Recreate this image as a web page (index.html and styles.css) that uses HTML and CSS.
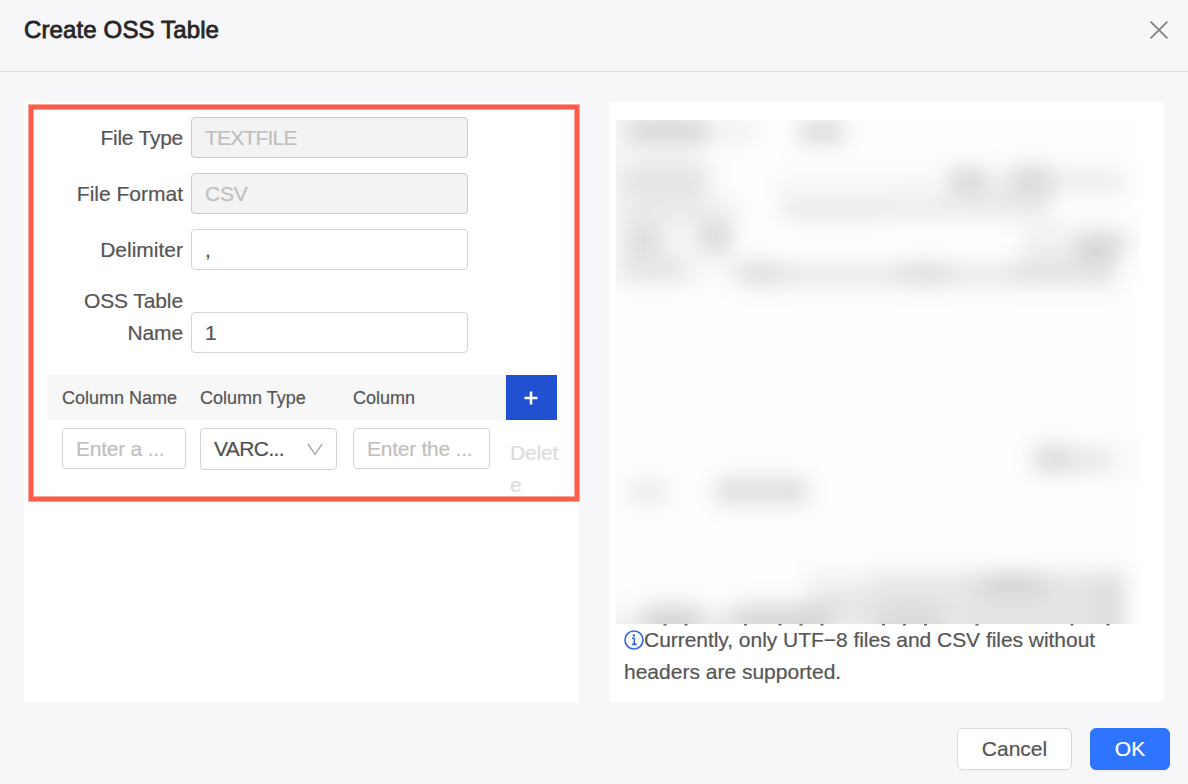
FILE: index.html
```html
<!DOCTYPE html>
<html lang="en">
<head>
<meta charset="utf-8">
<title>Create OSS Table</title>
<link rel="stylesheet" href="styles.css">
</head>
<body>
<div class="dialog">
  <header class="dialog-header">
    <h1 class="title">Create OSS Table</h1>
    <svg class="close" width="20" height="20" viewBox="0 0 20 20"><path d="M1.6 1.6 18.4 18.4M18.4 1.6 1.6 18.4"/></svg>
  </header>
  <main class="panels">
    <section class="panel form-panel">
      <div class="field"><span class="label tight">File Type</span><div class="input disabled caps">TEXTFILE</div></div>
      <div class="field"><span class="label">File Format</span><div class="input disabled tight">CSV</div></div>
      <div class="field"><span class="label">Delimiter</span><div class="input">,</div></div>
      <div class="field tall"><span class="label snug">OSS Table Name</span><div class="input">1</div></div>
      <div class="table">
        <div class="thead">
          <span>Column Name</span><span>Column Type</span><span>Column</span>
          <div class="add"><svg width="14" height="14" viewBox="0 0 14 14"><path d="M7 .5V13.5M.5 7H13.5"/></svg></div>
        </div>
        <div class="trow">
          <div class="input placeholder">Enter a ...</div>
          <div class="input select"><span>VARC...</span><svg width="16" height="13" viewBox="0 0 16 13"><path d="M1 1 8 11.3 15 1"/></svg></div>
          <div class="input placeholder">Enter the ...</div>
          <div class="delete">Delet<br>e</div>
        </div>
      </div>
      <div class="highlight"></div>
    </section>
    <section class="panel info-panel">
      <svg class="preview" width="524" height="506" viewBox="0 0 524 506">
        <defs>
          <filter id="soft" x="-40" y="-40" width="604" height="590" filterUnits="userSpaceOnUse"><feGaussianBlur stdDeviation="10.5"/></filter>
          <clipPath id="area"><rect width="524" height="504"/></clipPath>
        </defs>
        <g clip-path="url(#area)">
          <rect width="524" height="504" fill="#fefefe"/>
          <g filter="url(#soft)">
            <rect x="14" y="0" width="75" height="22" fill-opacity=".14"/>
            <rect x="89" y="0" width="50" height="22" fill-opacity=".06"/>
            <rect x="183" y="0" width="45" height="24" fill-opacity=".14"/>
            <rect x="-30" y="-30" width="120" height="195" fill-opacity=".035"/>
            <rect x="6" y="46" width="91" height="28" fill-opacity=".07"/>
            <rect x="8" y="78" width="115" height="22" fill-opacity=".055"/>
            <rect x="12" y="106" width="32" height="28" fill-opacity=".11"/>
            <rect x="8" y="138" width="60" height="24" fill-opacity=".07"/>
            <rect x="86" y="102" width="30" height="30" fill-opacity=".15"/>
            <rect x="104" y="138" width="20" height="22" fill-opacity=".05"/>
            <rect x="124" y="142" width="42" height="24" fill-opacity=".13"/>
            <rect x="165" y="79" width="105" height="20" fill-opacity=".09"/>
            <rect x="160" y="50" width="170" height="28" fill-opacity=".025"/>
            <rect x="270" y="77" width="165" height="22" fill-opacity=".075"/>
            <rect x="333" y="47" width="36" height="28" fill-opacity=".15"/>
            <rect x="369" y="52" width="26" height="28" fill-opacity=".06"/>
            <rect x="395" y="45" width="40" height="32" fill-opacity=".14"/>
            <rect x="435" y="50" width="73" height="22" fill-opacity=".075"/>
            <rect x="166" y="144" width="122" height="22" fill-opacity=".09"/>
            <rect x="288" y="142" width="41" height="24" fill-opacity=".13"/>
            <rect x="329" y="144" width="79" height="22" fill-opacity=".09"/>
            <rect x="405" y="138" width="55" height="28" fill-opacity=".1"/>
            <rect x="405" y="104" width="60" height="34" fill-opacity=".05"/>
            <rect x="460" y="120" width="40" height="46" fill-opacity=".11"/>
            <rect x="464" y="108" width="50" height="28" fill-opacity=".09"/>
            <rect x="13" y="362" width="39" height="20" fill-opacity=".09"/>
            <rect x="100" y="358" width="92" height="26" fill-opacity=".13"/>
            <rect x="418" y="325" width="34" height="28" fill-opacity=".14"/>
            <rect x="452" y="327" width="44" height="26" fill-opacity=".09"/>
            <rect x="498" y="330" width="36" height="20" fill-opacity=".02"/>
            <rect x="-10" y="488" width="38" height="45" fill-opacity=".05"/>
            <rect x="28" y="484" width="56" height="50" fill-opacity=".15"/>
            <rect x="84" y="488" width="34" height="48" fill-opacity=".07"/>
            <rect x="118" y="483" width="98" height="50" fill-opacity=".14"/>
            <rect x="190" y="450" width="55" height="45" fill-opacity=".05"/>
            <rect x="216" y="474" width="40" height="60" fill-opacity=".06"/>
            <rect x="250" y="452" width="95" height="82" fill-opacity=".09"/>
            <rect x="265" y="484" width="60" height="50" fill-opacity=".06"/>
            <rect x="345" y="452" width="163" height="84" fill-opacity=".1"/>
            <rect x="366" y="452" width="62" height="24" fill-opacity=".07"/>
            <rect x="482" y="450" width="26" height="76" fill-opacity=".03"/>
          </g>
        </g>
        <path class="ticks" d="M47.5 504.7h3M68.5 504.7h3M128 504.7h3M162.5 504.7h3M183.5 504.7h3M204.5 504.7h3M266 504.7h3M287 504.7h3M308 504.7h3M359.5 504.7h3M454.5 504.7h3M490.5 504.7h3"/>
      </svg>
      <p class="note"><svg class="info" width="20" height="20" viewBox="0 0 20 20"><circle cx="10" cy="10" r="9"/><path d="M8 8.3h2.3v6M7.8 14.4h4.8"/><circle class="dot" cx="9.9" cy="5.4" r="1.2"/></svg><span class="first-line">Currently, only UTF−8 files and CSV files without</span><br>headers are supported.</p>
    </section>
  </main>
  <footer class="actions">
    <div class="btn">Cancel</div>
    <div class="btn primary">OK</div>
  </footer>
</div>
</body>
</html>
```

FILE: styles.css
```css
* { box-sizing: border-box; }
body { margin: 0; font-family: "Liberation Sans", Arial, sans-serif; font-size: 21px; line-height: 32px; color: #555; -webkit-text-stroke: .2px; }
.dialog { width: 1188px; height: 784px; background: #f7f7fa; overflow: hidden; }
.dialog-header { height: 72px; border-bottom: 1px solid #dcdcde; display: flex; justify-content: space-between; align-items: flex-start; padding: 14px 19px 0 24px; }
.title { margin: 0; font-size: 24px; font-weight: 400; line-height: 32px; color: #262626; letter-spacing: .13px; -webkit-text-stroke: .8px #262626; }
.close { margin-top: 6px; fill: none; stroke: #808084; stroke-width: 1.7; }
.panels { display: flex; gap: 30px; padding: 30px 24px 0; }
.panel { width: 555px; height: 600px; background: #fff; position: relative; }
.form-panel { padding: 15px 0 0 23px; }
.field { display: flex; align-items: center; height: 41px; margin-bottom: 15px; }
.label { width: 136px; margin-right: 8px; text-align: right; padding-left: 20px; }
.tight { letter-spacing: -.25px; }
.snug { letter-spacing: -.1px; }
.caps { letter-spacing: -.8px; }
.tall { height: 68px; align-items: flex-end; margin-bottom: 22px; }
.tall .label { padding-bottom: 4px; }
.input { width: 277px; height: 41px; border: 1px solid #d4d4d4; border-radius: 4px; background: #fff; padding: 0 13px; line-height: 40px; white-space: nowrap; overflow: hidden; }
.disabled { background: #f3f3f3; border-color: #cbcbcb; color: #bfbfbf; }
.table { width: 510px; }
.thead { height: 45px; display: grid; grid-template-columns: 138px 153px 153px 51px; padding-left: 15px; align-items: center; background: #f7f7f7; font-size: 18px; }
.add { width: 51px; height: 45px; background: #2151d1; display: flex; align-items: center; justify-content: center; }
.add svg { stroke: #fff; stroke-width: 2.6; fill: none; margin-right: 1px; }
.trow { display: grid; grid-template-columns: 124px 137px 137px 47px; column-gap: 14px; padding: 8px 0 0 15px; align-items: start; }
.trow .input { width: auto; }
.trow .placeholder { color: #bfbfbf; letter-spacing: -.25px; }
.trow .placeholder:nth-child(3) { margin-left: 2px; margin-right: -2px; }
.trow .select { height: 42px; display: flex; align-items: center; justify-content: space-between; color: #505050; letter-spacing: -.6px; }
.select svg { stroke: #a8a8a8; stroke-width: 1.4; fill: none; }
.delete { margin: 9px 0 0 8px; color: #dcdcdc; letter-spacing: -.2px; }
.highlight { position: absolute; left: 4px; top: 2px; width: 552px; height: 398px; border: 1px solid #ffa69c; }
.highlight::before { content: ""; position: absolute; inset: 0; border: 4px solid #ff5b4b; }
.highlight::after { content: ""; position: absolute; inset: 4px; border: 1px solid #ffa69c; }
.info-panel { padding: 18px 0 0 7px; }
.preview { display: block; }
.ticks { stroke: #666; stroke-width: 1.4; }
.note { margin: -2px 0 0 8px; white-space: nowrap; }
.first-line { letter-spacing: -.04px; }
.info { vertical-align: -3px; fill: none; stroke: #3264e6; stroke-width: 1.6; }
.info .dot { fill: #3264e6; stroke: none; }
.actions { display: flex; justify-content: flex-end; gap: 18px; padding: 26px 18px 0 0; }
.btn { width: 115px; height: 42px; border: 1px solid #d9d9d9; border-radius: 6px; background: #fff; text-align: center; line-height: 40px; box-shadow: 0 2px 0 rgba(0,0,0,.015); }
.primary { width: 80px; background: #2e74ff; border-color: #2e74ff; color: #fff; }
```
